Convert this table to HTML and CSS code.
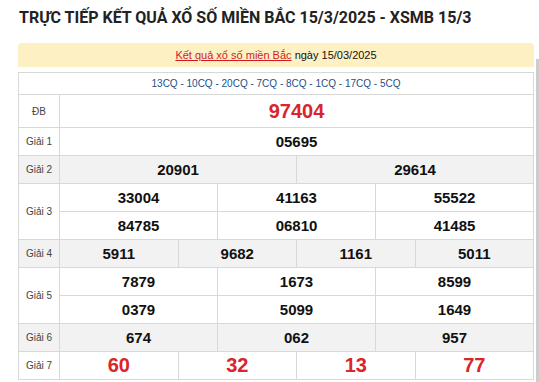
FILE: index.html
```html
<!DOCTYPE html>
<html lang="vi">
<head>
<meta charset="utf-8">
<title>XSMB 15/3</title>
<link rel="stylesheet" href="styles.css">
</head>
<body>
<div class="page">
  <div class="main">
    <h1 class="title">TRỰC TIẾP KẾT QUẢ XỔ SỐ MIỀN BẮC 15/3/2025 - XSMB 15/3</h1>
    <div class="banner"><a class="banner-link" href="#">Kết quả xổ số miền Bắc</a> ngày 15/03/2025</div>
    <table class="results">
      <colgroup>
        <col class="c-label">
        <col><col><col><col><col><col><col><col><col><col><col><col>
      </colgroup>
      <tr class="r-code"><td colspan="13" class="codes">13CQ - 10CQ - 20CQ - 7CQ - 8CQ - 1CQ - 17CQ - 5CQ</td></tr>
      <tr class="r-db"><td class="label">ĐB</td><td colspan="12" class="num big red">97404</td></tr>
      <tr class="r-n"><td class="label">Giải 1</td><td colspan="12" class="num">05695</td></tr>
      <tr class="r-n alt"><td class="label">Giải 2</td><td colspan="6" class="num">20901</td><td colspan="6" class="num">29614</td></tr>
      <tr class="r-n"><td class="label" rowspan="2">Giải 3</td><td colspan="4" class="num">33004</td><td colspan="4" class="num">41163</td><td colspan="4" class="num">55522</td></tr>
      <tr class="r-n"><td colspan="4" class="num">84785</td><td colspan="4" class="num">06810</td><td colspan="4" class="num">41485</td></tr>
      <tr class="r-n alt"><td class="label">Giải 4</td><td colspan="3" class="num">5911</td><td colspan="3" class="num">9682</td><td colspan="3" class="num">1161</td><td colspan="3" class="num">5011</td></tr>
      <tr class="r-n"><td class="label" rowspan="2">Giải 5</td><td colspan="4" class="num">7879</td><td colspan="4" class="num">1673</td><td colspan="4" class="num">8599</td></tr>
      <tr class="r-n"><td colspan="4" class="num">0379</td><td colspan="4" class="num">5099</td><td colspan="4" class="num">1649</td></tr>
      <tr class="r-n alt"><td class="label">Giải 6</td><td colspan="4" class="num">674</td><td colspan="4" class="num">062</td><td colspan="4" class="num">957</td></tr>
      <tr class="r-n"><td class="label">Giải 7</td><td colspan="3" class="num big red">60</td><td colspan="3" class="num big red">32</td><td colspan="3" class="num big red">13</td><td colspan="3" class="num big red">77</td></tr>
    </table>
  </div>
  <div class="edge"></div>
</div>
</body>
</html>
```

FILE: styles.css
```css
html, body {
  margin: 0;
  padding: 0;
  background: #fff;
  font-family: "Liberation Sans", Arial, sans-serif;
  overflow: hidden;
}

.page {
  display: flex;
  align-items: flex-start;
}

.main {
  padding-left: 18px;
  width: 516px;
  flex: none;
}

.edge {
  flex: none;
  width: 3px;
  height: 330px;
  margin-top: 59px;
  margin-left: 2px;
  background: #cdcdcd;
}

.title {
  margin: 0;
  padding: 8px 0 0 1px;
  font-family: Roboto, "Liberation Sans", sans-serif;
  font-size: 16px;
  line-height: 20px;
  font-weight: bold;
  color: #222;
  white-space: nowrap;
}

.banner {
  margin-top: 15px;
  height: 24px;
  line-height: 24px;
  background: #fdf1c4;
  border-radius: 4px 4px 0 0;
  text-align: center;
  font-size: 11px;
  color: #111;
}

.banner-link {
  color: #d4191f;
  text-decoration: underline;
}

.results {
  margin-top: 5px;
  width: 516px;
  border-collapse: collapse;
  table-layout: fixed;
}

.results td {
  border: 1px solid #d8d8d8;
  padding: 0;
  text-align: center;
}

.c-label {
  width: 41px;
}

.r-code td {
  height: 21px;
}

.codes {
  font-size: 10px;
  color: #1d4f88;
}

.r-db td {
  height: 32px;
}

.r-n td {
  height: 27px;
}

.alt td {
  background: #f2f2f2;
}

.label {
  font-size: 10px;
  color: #444;
}

.num {
  font-size: 15px;
  font-weight: bold;
  color: #111;
}

.big {
  font-size: 20px;
}

.red {
  color: #d9252b;
}
```
